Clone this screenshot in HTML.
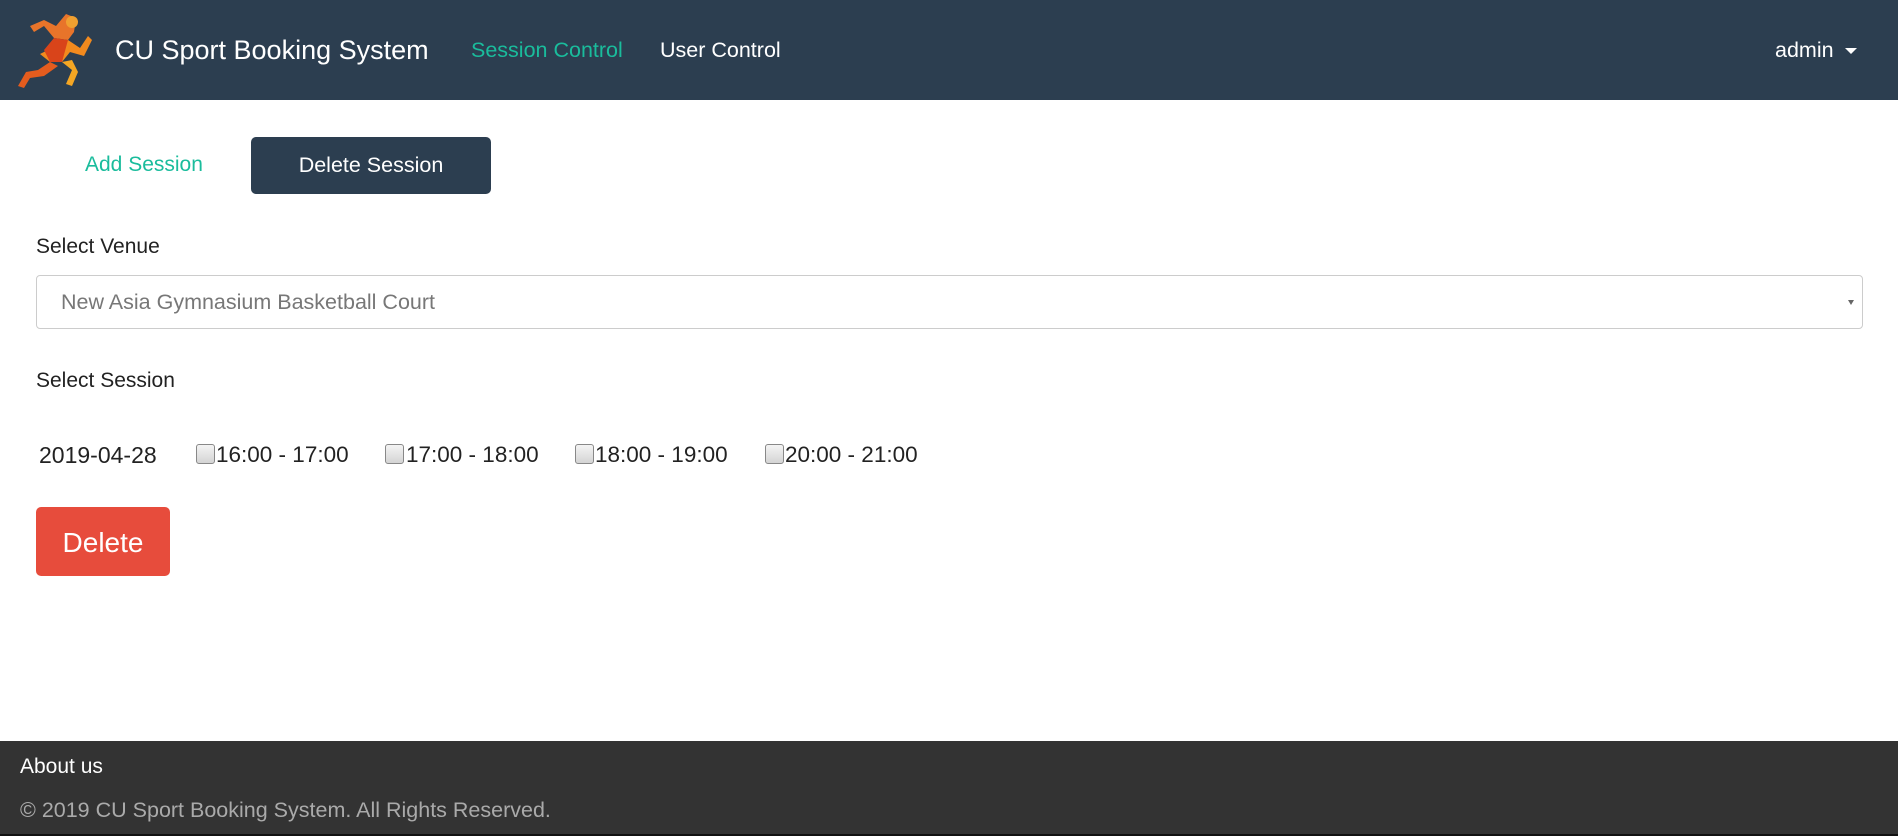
<!DOCTYPE html>
<html><head><meta charset="utf-8"><style>
*{box-sizing:border-box;margin:0;padding:0}
body{width:1898px;height:836px;overflow:hidden;font-family:"Liberation Sans",sans-serif;background:#fff;position:relative;color:#222}
.nav{position:absolute;left:0;top:0;width:1898px;height:100px;background:#2c3e50}
.abs{position:absolute;white-space:nowrap}
.footer{position:absolute;left:0;top:741px;width:1898px;height:95px;background:#333}
.cb{position:absolute;width:19px;height:20px;border:1px solid #888;border-radius:3px;background:linear-gradient(#f4f4f4,#d4d4d4);top:444px}
.t{font-size:22.5px;top:442px}
</style></head><body>
<div class="nav">
<svg class="abs" style="left:14px;top:10px" width="78" height="78" viewBox="0 0 78 78">
<polygon points="52,4 62,8 60,22 54,30 40,28 30,16 20,22 16,16 30,10 42,16" fill="#e8742a"/>
<polygon points="54,30 66,38 74,26 78,30 70,46 56,42 48,52 36,52 26,44" fill="#f28a1e"/>
<polygon points="36,52 24,60 12,62 4,76 10,78 16,68 30,66 44,56" fill="#e45c1e"/>
<polygon points="48,52 58,60 52,74 58,76 64,62 58,50" fill="#f5a623"/>
<polygon points="40,28 54,30 48,52 36,52 30,40" fill="#d9441a"/>
<circle cx="58" cy="12" r="6" fill="#f0a030"/>
</svg>
<div class="abs" style="left:115px;top:35px;font-size:27px;color:#fff">CU Sport Booking System</div>
<div class="abs" style="left:471px;top:38px;font-size:21.5px;color:#1abc9c">Session Control</div>
<div class="abs" style="left:660px;top:38px;font-size:21.5px;color:#fff">User Control</div>
<div class="abs" style="left:1775px;top:38px;font-size:21.5px;color:#fff">admin</div>
<div class="abs" style="left:1845px;top:48px;width:0;height:0;border-left:6px solid transparent;border-right:6px solid transparent;border-top:6px solid #fff"></div>
</div>
<div class="abs" style="left:85px;top:153px;font-size:21px;color:#1abc9c">Add Session</div>
<div class="abs" style="left:251px;top:137px;width:240px;height:57px;background:#2c3e50;border-radius:5px;color:#fff;font-size:21.5px;text-align:center;line-height:57px">Delete Session</div>
<div class="abs" style="left:36px;top:235px;font-size:21px">Select Venue</div>
<div class="abs" style="left:36px;top:275px;width:1827px;height:54px;border:1px solid #ccc;border-radius:4px"></div>
<div class="abs" style="left:61px;top:290px;font-size:21.5px;color:#777">New Asia Gymnasium Basketball Court</div>
<div class="abs" style="left:1848px;top:300px;width:0;height:0;border-left:3px solid transparent;border-right:3px solid transparent;border-top:5px solid #666"></div>
<div class="abs" style="left:36px;top:369px;font-size:21px">Select Session</div>
<div class="abs t" style="left:39px;font-size:23px">2019-04-28</div>
<div class="cb" style="left:196px"></div><div class="abs t" style="left:216px">16:00 - 17:00</div>
<div class="cb" style="left:385px"></div><div class="abs t" style="left:406px">17:00 - 18:00</div>
<div class="cb" style="left:575px"></div><div class="abs t" style="left:595px">18:00 - 19:00</div>
<div class="cb" style="left:765px"></div><div class="abs t" style="left:785px">20:00 - 21:00</div>
<div class="abs" style="left:36px;top:507px;width:134px;height:69px;background:#e74c3c;border-radius:5px;color:#fff;font-size:28px;text-align:center;line-height:71px">Delete</div>
<div class="footer">
<div class="abs" style="left:20px;top:14px;font-size:21px;color:#fff">About us</div>
<div class="abs" style="left:20px;top:57px;font-size:21.5px;color:#aaa">© 2019 CU Sport Booking System. All Rights Reserved.</div>
<div class="abs" style="left:0;top:93px;width:1898px;height:2px;background:#111"></div>
</div>
</body></html>
